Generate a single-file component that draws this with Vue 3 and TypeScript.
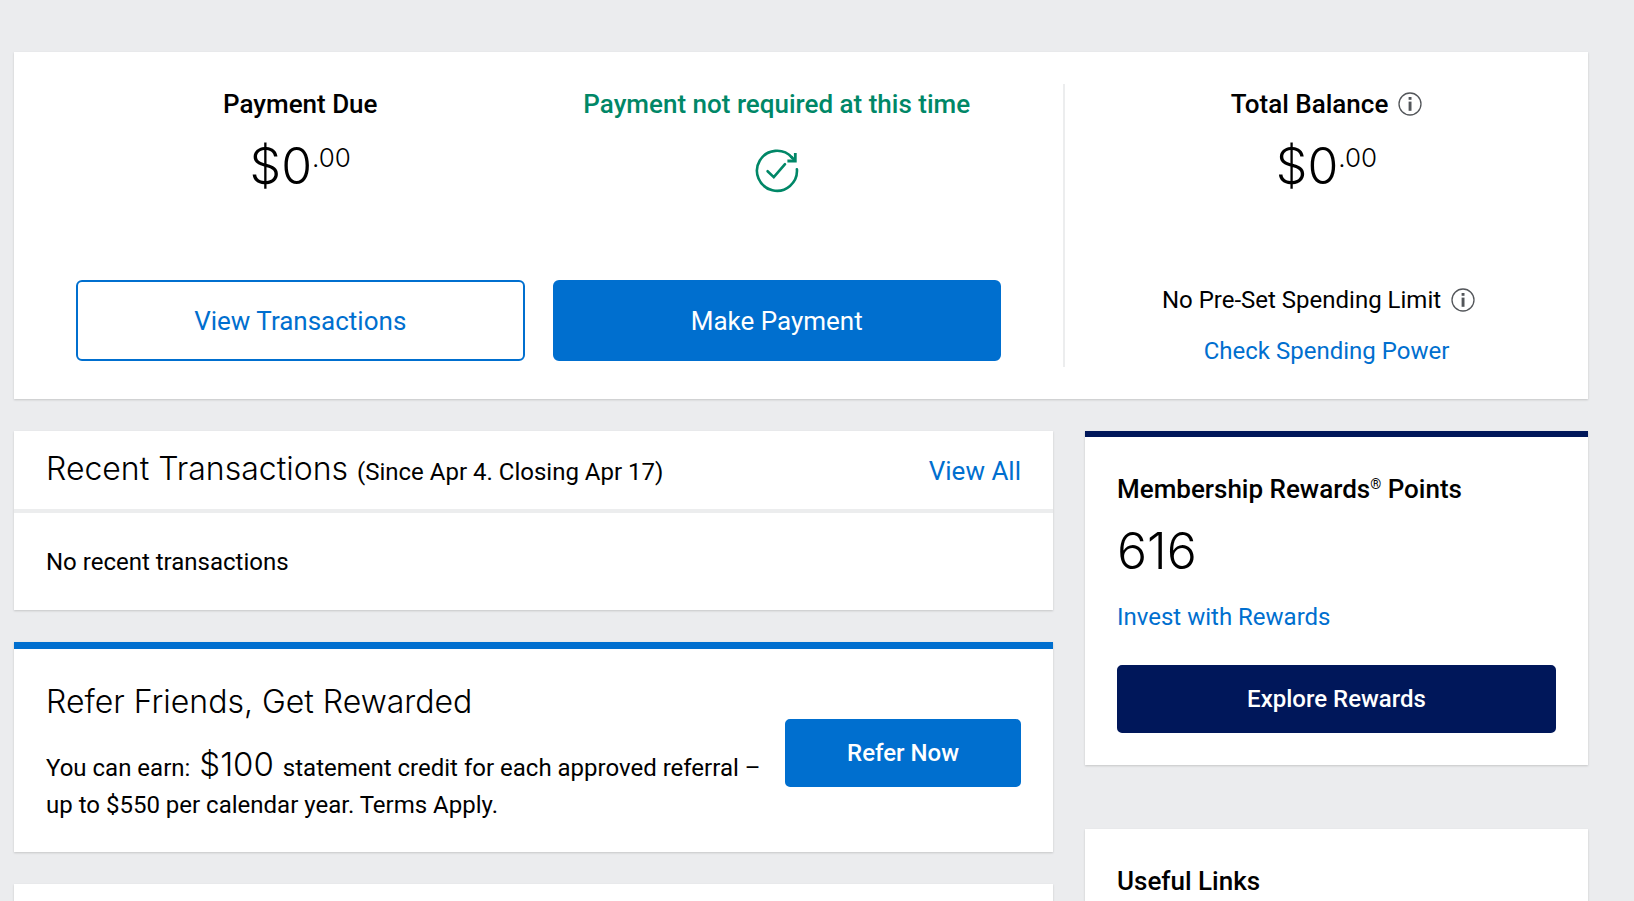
<script setup lang="ts">
import { h, type FunctionalComponent } from 'vue'

interface Amount {
  whole: string
  cents: string
}

const paymentDue: Amount = { whole: '$0', cents: '.00' }
const totalBalance: Amount = { whole: '$0', cents: '.00' }
const points = 616

const InfoIcon: FunctionalComponent = () =>
  h('svg', { viewBox: '0 0 24 24', width: 24, height: 24, fill: 'none', 'aria-hidden': 'true' }, [
    h('circle', { cx: 12, cy: 12, r: 11, stroke: '#53565a', 'stroke-width': 1.3 }),
    h('rect', { x: 10.6, y: 5, width: 2.9, height: 2.8, fill: '#53565a' }),
    h('rect', { x: 10.6, y: 9.6, width: 2.9, height: 9.2, fill: '#53565a' }),
  ])
</script>

<template>
  <main class="page">
    <section class="card summary">
      <div class="account">
        <div class="column">
          <h2 class="label">Payment Due</h2>
          <p class="amount">{{ paymentDue.whole }}<span class="cents">{{ paymentDue.cents }}</span></p>
          <button type="button" class="button large outline">View Transactions</button>
        </div>
        <div class="column">
          <h2 class="label good">Payment not required at this time</h2>
          <svg class="status" viewBox="0 0 48 48" width="48" height="48" fill="none" aria-hidden="true">
            <path d="M43.9 23.2A20 20 0 1 1 39 11.6" stroke="#008767" stroke-width="2.6" stroke-linecap="round" />
            <path d="M35.8 15H42.3V8.4" stroke="#008767" stroke-width="2.8" stroke-linecap="square" />
            <path d="M38 10.5L42 14.6" stroke="#008767" stroke-width="2.6" />
            <path d="M14.6 25.2L20.8 31.2L32 18.2" stroke="#008767" stroke-width="2.6" stroke-linecap="round" />
          </svg>
          <button type="button" class="button large primary">Make Payment</button>
        </div>
      </div>
      <div class="balance">
        <h2 class="label with-icon">
          Total Balance
          <button type="button" class="info" aria-label="About total balance"><InfoIcon /></button>
        </h2>
        <p class="amount">{{ totalBalance.whole }}<span class="cents">{{ totalBalance.cents }}</span></p>
        <div class="limit">
          <p class="with-icon limit-note">
            No Pre-Set Spending Limit
            <button type="button" class="info" aria-label="About spending limit"><InfoIcon /></button>
          </p>
          <a href="#spending-power">Check Spending Power</a>
        </div>
      </div>
    </section>

    <div class="columns">
      <div class="stack">
        <section class="card">
          <header class="transactions-head">
            <h2 class="title">Recent Transactions <small>(Since Apr 4. Closing Apr 17)</small></h2>
            <a href="#all" class="view-all">View All</a>
          </header>
          <p class="empty">No recent transactions</p>
        </section>

        <section class="card refer">
          <div class="refer-text">
            <h2 class="title">Refer Friends, Get Rewarded</h2>
            <p class="offer">
              You can earn: <span class="reward">$100</span> statement credit for each approved referral –
              up to $550 per calendar year. Terms Apply.
            </p>
          </div>
          <button type="button" class="button primary strong refer-button">Refer Now</button>
        </section>

        <section class="card next"></section>
      </div>

      <aside class="side">
        <section class="card rewards">
          <h2 class="label">Membership Rewards<span class="mark">®</span> Points</h2>
          <p class="amount">{{ points }}</p>
          <a href="#invest">Invest with Rewards</a>
          <button type="button" class="button navy strong">Explore Rewards</button>
        </section>
        <section class="card links">
          <h2 class="label">Useful Links</h2>
        </section>
      </aside>
    </div>
  </main>
</template>

<style>
body {
  background: #ebecee;
}
html {
  height: 100%;
  overflow: hidden;
}
</style>

<style scoped>
.page {
  box-sizing: border-box;
  height: 100vh;
  overflow: hidden;
  padding: 52px 46px 0 14px;
  color: #000;
  font-family: Roboto, 'Liberation Sans', sans-serif;
  font-size: 24px;
  line-height: 32px;
}
h2,
p {
  margin: 0;
}
a {
  color: #006fcf;
  text-decoration: none;
}
.card {
  background: #fff;
  box-shadow: 0 1px 2px rgba(0, 0, 0, 0.16);
}
.label {
  font-size: 26px;
  font-weight: 500;
  line-height: 32px;
}
.good {
  color: #008767;
}
.amount {
  font-family: Inter, sans-serif;
  font-size: 50px;
  font-weight: 300;
  line-height: 60px;
}
.cents {
  font-size: 26px;
  line-height: 26px;
  vertical-align: 17px;
}
.title {
  font-family: Inter, sans-serif;
  font-size: 32px;
  font-weight: 300;
  line-height: 40px;
}
.title small {
  font-family: Roboto, sans-serif;
  font-size: 24px;
  font-weight: 400;
  line-height: 24px;
}
.button {
  box-sizing: border-box;
  height: 68px;
  border: 2px solid transparent;
  border-radius: 5px;
  font: inherit;
  color: #fff;
  cursor: pointer;
}
.strong {
  font-weight: 500;
}
.large {
  width: 100%;
  height: 81px;
  margin-top: auto;
  margin-bottom: 6px;
  border-radius: 6px;
  font-size: 26px;
}
.primary {
  background: #006fcf;
  border-color: #006fcf;
}
.outline {
  background: #fff;
  border-color: #006fcf;
  color: #006fcf;
}
.navy {
  background: #00175a;
  border-color: #00175a;
}

.summary {
  display: grid;
  grid-template-columns: 1051fr 523fr;
  padding: 32px 0;
}
.account {
  display: grid;
  grid-template-columns: 1fr 1fr;
  gap: 28px;
  min-height: 283px;
  padding: 0 62px;
  border-right: 2px solid #ecedee;
}
.column,
.balance {
  display: flex;
  flex-direction: column;
  align-items: center;
  padding-top: 4px;
}
.column .amount,
.balance .amount {
  margin-top: 16px;
}
.status {
  margin-top: 26px;
}
.with-icon {
  display: flex;
  align-items: center;
  gap: 10px;
}
.info {
  display: flex;
  padding: 0;
  border: 0;
  background: none;
  cursor: pointer;
}
.limit {
  display: flex;
  flex-direction: column;
  align-items: center;
  gap: 19px;
  margin-top: auto;
}
.limit-note {
  padding-right: 16px;
}

.columns {
  display: grid;
  grid-template-columns: 1039fr 503fr;
  align-items: start;
  gap: 32px;
  margin-top: 32px;
}
.stack {
  display: flex;
  flex-direction: column;
  gap: 32px;
}
.transactions-head {
  display: flex;
  align-items: baseline;
  justify-content: space-between;
  padding: 18px 32px 20px;
  border-bottom: 4px solid #ecedee;
}
.view-all {
  font-size: 26px;
}
.empty {
  padding: 33px 32px 32px;
}
.refer {
  display: flex;
  align-items: center;
  gap: 16px;
  padding: 33px 32px 28px;
  border-top: 7px solid #006fcf;
}
.refer-text {
  flex: 1;
}
.offer {
  margin-top: 26px;
  line-height: 37px;
}
.reward {
  margin: 0 3px;
  font-family: Inter, sans-serif;
  font-size: 33px;
  font-weight: 300;
  line-height: 33px;
}
.refer-button {
  width: 236px;
}
.next {
  height: 120px;
}
.side {
  display: flex;
  flex-direction: column;
  gap: 64px;
}
.rewards {
  display: flex;
  flex-direction: column;
  padding: 36px 32px 32px;
  border-top: 6px solid #00175a;
}
.rewards .amount {
  margin-top: 16px;
  margin-bottom: 20px;
}
.rewards .button {
  margin-top: 32px;
}
.mark {
  font-size: 14px;
  font-weight: 400;
  line-height: 14px;
  vertical-align: 9px;
}
.links {
  padding: 36px 32px;
}
</style>
